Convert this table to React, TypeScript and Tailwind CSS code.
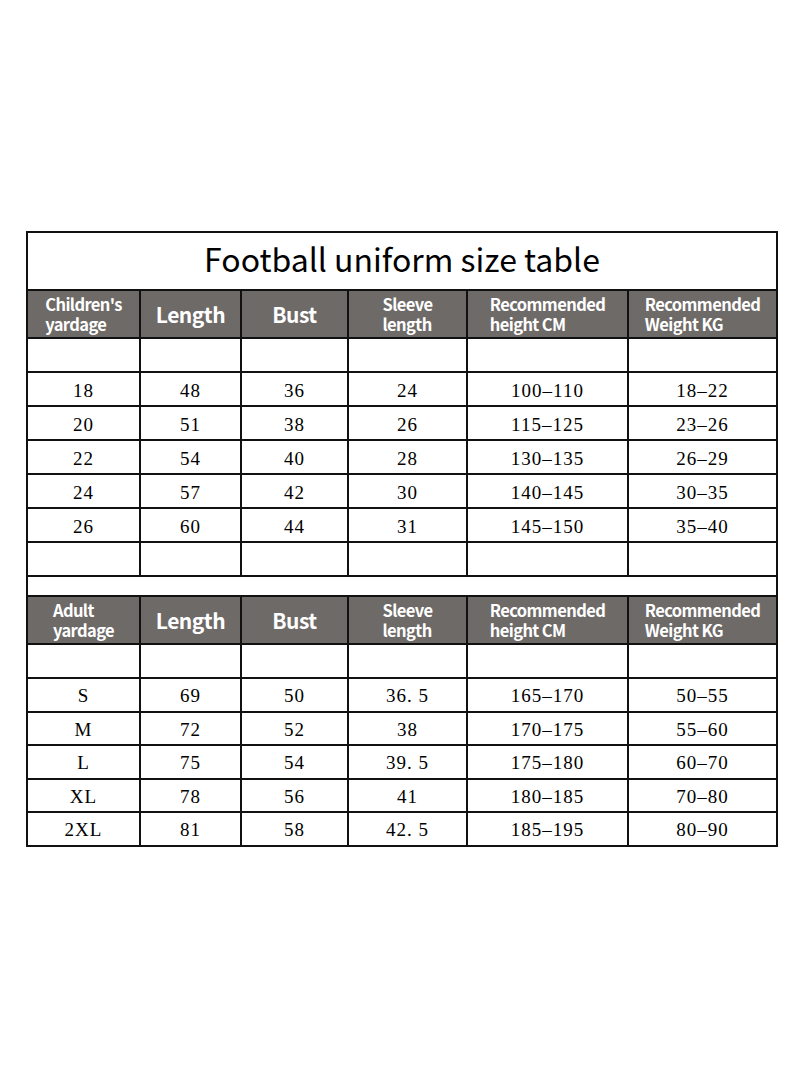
const children = [
  ["18", "48", "36", "24", "100–110", "18–22"],
  ["20", "51", "38", "26", "115–125", "23–26"],
  ["22", "54", "40", "28", "130–135", "26–29"],
  ["24", "57", "42", "30", "140–145", "30–35"],
  ["26", "60", "44", "31", "145–150", "35–40"],
];

const adults = [
  ["S", "69", "50", "36. 5", "165–170", "50–55"],
  ["M", "72", "52", "38", "170–175", "55–60"],
  ["L", "75", "54", "39. 5", "175–180", "60–70"],
  ["XL", "78", "56", "41", "180–185", "70–80"],
  ["2XL", "81", "58", "42. 5", "185–195", "80–90"],
];

const sans = "font-['Noto_Sans_CJK_KR','Noto_Sans',sans-serif]";
const serif = "font-['Liberation_Serif','DejaVu_Serif',serif]";

function HeaderRow({ first }: { first: [string, string] }) {
  const cols: (string | [string, string])[] = [
    first,
    "Length",
    "Bust",
    ["Sleeve", "length"],
    ["Recommended", "height CM"],
    ["Recommended", "Weight KG"],
  ];
  return (
    <>
      {cols.map((c, i) => (
        <div
          key={i}
          className={`flex h-[46px] items-center justify-center bg-[#6e6a68] text-white ${sans} font-bold`}
        >
          {typeof c === "string" ? (
            <span className="text-[21px] leading-[26px] tracking-[-0.5px]">{c}</span>
          ) : (
            <span className="inline-block text-left text-[16.5px] leading-[20px] tracking-[-0.6px]">
              {c[0]}
              <br />
              {c[1]}
            </span>
          )}
        </div>
      ))}
    </>
  );
}

function EmptyRow() {
  return (
    <>
      {[0, 1, 2, 3, 4, 5].map((i) => (
        <div key={i} className="h-[32px] bg-white" />
      ))}
    </>
  );
}

function DataRows({ rows, tall }: { rows: string[][]; tall?: boolean }) {
  return (
    <>
      {rows.map((r, ri) =>
        r.map((v, ci) => (
          <div
            key={`${ri}-${ci}`}
            className={`flex items-center justify-center bg-white pt-[3px] text-[19px] leading-[24px] tracking-[1px] text-black ${serif} ${
              tall ? "h-[32px]" : "h-[31.5px]"
            }`}
          >
            {v}
          </div>
        )),
      )}
    </>
  );
}

export default function App() {
  return (
    <div className="min-h-[1091px] w-[800px] bg-white pt-[231px] pl-[26px]">
      <div className="grid w-[752px] grid-cols-[111px_99px_105px_117px_159px_147px] gap-[2px] bg-[#111] p-[2px]">
        {/* Title */}
        <div
          className={`col-span-6 flex h-[56px] items-center justify-center bg-white pb-[6px] text-[32px] leading-[40px] text-black ${sans}`}
        >
          Football uniform size table
        </div>

        {/* Children's sizes */}
        <HeaderRow first={["Children's", "yardage"]} />
        <EmptyRow />
        <DataRows rows={children} tall />
        <EmptyRow />

        {/* Spacer band */}
        <div className="col-span-6 h-[18px] bg-white" />

        {/* Adult sizes */}
        <HeaderRow first={["Adult", "yardage"]} />
        <EmptyRow />
        <DataRows rows={adults} />
      </div>
    </div>
  );
}
